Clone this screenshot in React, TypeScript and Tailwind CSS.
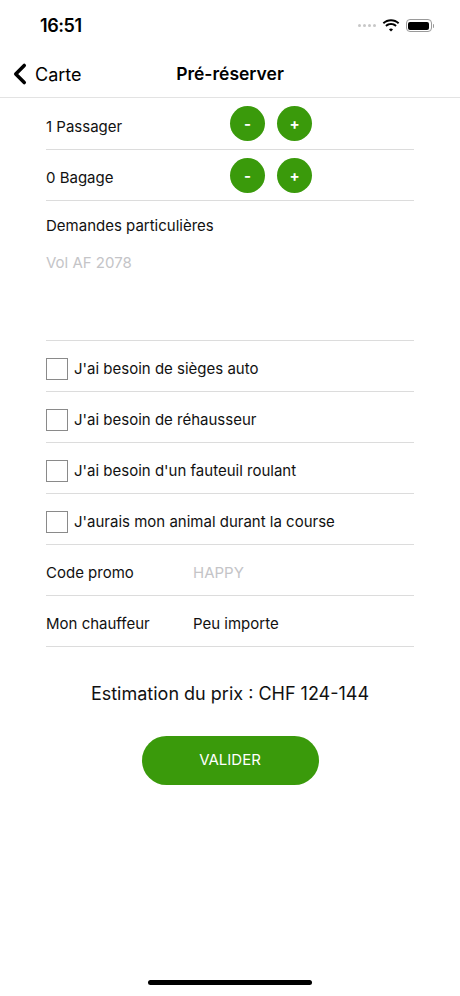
import { ChevronLeft } from "lucide-react";

const font = { fontFamily: '"Inter", "Liberation Sans", sans-serif' };

function RoundBtn({ label }: { label: string }) {
  return (
    <button className="flex h-[35px] w-[35px] items-center justify-center rounded-full bg-[#3a9a0b] text-[15px] font-bold leading-none text-white">
      {label}
    </button>
  );
}

function Counter({ label, first }: { label: string; first?: boolean }) {
  return (
    <div className={`flex items-center border-b border-[#dcdcdc] ${first ? "h-[52px]" : "h-[51px]"}`}>
      <span className="mt-[7px] w-[184px] text-[15px] text-[#111]">{label}</span>
      <div className="flex gap-[12px]">
        <RoundBtn label="-" />
        <RoundBtn label="+" />
      </div>
    </div>
  );
}

function CheckRow({ label }: { label: string }) {
  return (
    <div className="flex h-[51px] items-center gap-[6px] border-b border-[#dcdcdc] pt-[6px]">
      <span className="h-[22px] w-[22px] border border-[#8a8a8a]" />
      <span className="text-[15px] text-[#111]">{label}</span>
    </div>
  );
}

function FieldRow({ label, value, muted }: { label: string; value: string; muted?: boolean }) {
  return (
    <div className="flex h-[51px] items-center border-b border-[#dcdcdc] pt-[6px]">
      <span className="w-[147px] text-[15px] text-[#111]">{label}</span>
      <span className={`text-[15px] ${muted ? "text-[#c4c4c7]" : "text-[#111]"}`}>{value}</span>
    </div>
  );
}

export default function App() {
  return (
    <div className="relative flex h-[996px] w-[460px] flex-col bg-white" style={font}>
      {/* status bar */}
      <div className="flex h-[51px] items-center justify-between pl-[40px] pr-[26px]">
        <span className="text-[18px] font-semibold tracking-tight text-black">16:51</span>
        <div className="flex items-center gap-[6px]">
          <div className="flex gap-[2px]">
            {[0, 1, 2, 3].map((i) => (
              <span key={i} className="h-[3px] w-[3px] rounded-full bg-[#c7c7c7]" />
            ))}
          </div>
          <svg width="18" height="13" viewBox="0 0 18 13">
            <path d="M9 2.2c2.7 0 5.1 1 7 2.7l1.3-1.4C15 1.4 12.1.2 9 .2S3 1.4.7 3.5L2 4.9c1.9-1.7 4.3-2.7 7-2.7z" fill="#000" />
            <path d="M9 6c1.7 0 3.2.6 4.4 1.7l1.3-1.4C13.1 4.9 11.1 4 9 4s-4.1.9-5.7 2.3l1.3 1.4C5.8 6.6 7.3 6 9 6z" fill="#000" />
            <path d="M9 9.6c.8 0 1.5.3 2 .8L9 12.6l-2-2.2c.5-.5 1.2-.8 2-.8z" fill="#000" />
          </svg>
          <div className="flex items-center">
            <div className="flex h-[13px] w-[26px] items-center rounded-[4px] border border-[#9a9a9a] p-[1.5px]">
              <div className="h-full w-full rounded-[2px] bg-black" />
            </div>
            <span className="ml-[1px] h-[4px] w-[1.5px] rounded-r bg-[#9a9a9a]" />
          </div>
        </div>
      </div>

      {/* nav bar */}
      <div className="relative flex h-[47px] items-center border-b border-[#e3e3e3]">
        <div className="flex items-center pl-[3px] text-black">
          <ChevronLeft size={34} strokeWidth={2.5} className="-mr-[2px]" />
          <span className="text-[18px]">Carte</span>
        </div>
        <span className="absolute left-1/2 -translate-x-1/2 text-[17.5px] font-semibold text-black">Pré-réserver</span>
      </div>

      {/* form */}
      <div className="mx-[46px] flex flex-col">
        <Counter label="1 Passager" first />
        <Counter label="0 Bagage" />
        <div className="flex h-[140px] flex-col border-b border-[#dcdcdc] pt-[14px]">
          <span className="text-[15px] text-[#111]">Demandes particulières</span>
          <span className="mt-[14px] text-[15px] text-[#c4c4c7]">Vol AF 2078</span>
        </div>
        <CheckRow label="J'ai besoin de sièges auto" />
        <CheckRow label="J'ai besoin de réhausseur" />
        <CheckRow label="J'ai besoin d'un fauteuil roulant" />
        <CheckRow label="J'aurais mon animal durant la course" />
        <FieldRow label="Code promo" value="HAPPY" muted />
        <FieldRow label="Mon chauffeur" value="Peu importe" />
      </div>

      <p className="mt-[33px] text-center text-[18px] text-[#111]">Estimation du prix : CHF 124-144</p>

      <div className="mt-[29px] flex justify-center">
        <button className="h-[49px] w-[177px] rounded-full bg-[#3a9a0b] text-[15px] text-white">VALIDER</button>
      </div>

      {/* home indicator */}
      <div className="absolute bottom-[11px] left-1/2 h-[5px] w-[164px] -translate-x-1/2 rounded-full bg-black" />
    </div>
  );
}
